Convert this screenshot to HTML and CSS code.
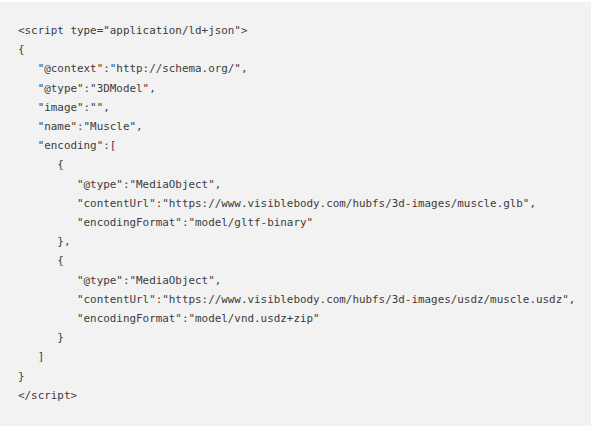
FILE: index.html
```html
<!DOCTYPE html>
<html>
<head>
<meta charset="utf-8">
<link rel="stylesheet" href="styles.css">
</head>
<body>
<div class="code-block">
<pre class="code">&lt;script type="application/ld+json"&gt;
{
   "@context":"http://schema.org/",
   "@type":"3DModel",
   "image":"",
   "name":"Muscle",
   "encoding":[
      {
         "@type":"MediaObject",
         "contentUrl":"https://www.visiblebody.com/hubfs/3d-images/muscle.glb",
         "encodingFormat":"model/gltf-binary"
      },
      {
         "@type":"MediaObject",
         "contentUrl":"https://www.visiblebody.com/hubfs/3d-images/usdz/muscle.usdz",
         "encodingFormat":"model/vnd.usdz+zip"
      }
   ]
}
&lt;/script&gt;</pre>
</div>
</body>
</html>
```

FILE: styles.css
```css
html, body {
  margin: 0;
  padding: 0;
  background: #ffffff;
  height: 100%;
}
body {
  padding-top: 2px;
  box-sizing: border-box;
}
.code-block {
  background: #f2f2f2;
  height: 100%;
  padding: 19px 18px 0 18px;
  box-sizing: border-box;
}
.code {
  margin: 0;
  font-family: "DejaVu Sans Mono", "Liberation Mono", monospace;
  font-size: 10.9px;
  line-height: 19.2px;
  color: #3c3c3c;
  white-space: pre;
}
```
